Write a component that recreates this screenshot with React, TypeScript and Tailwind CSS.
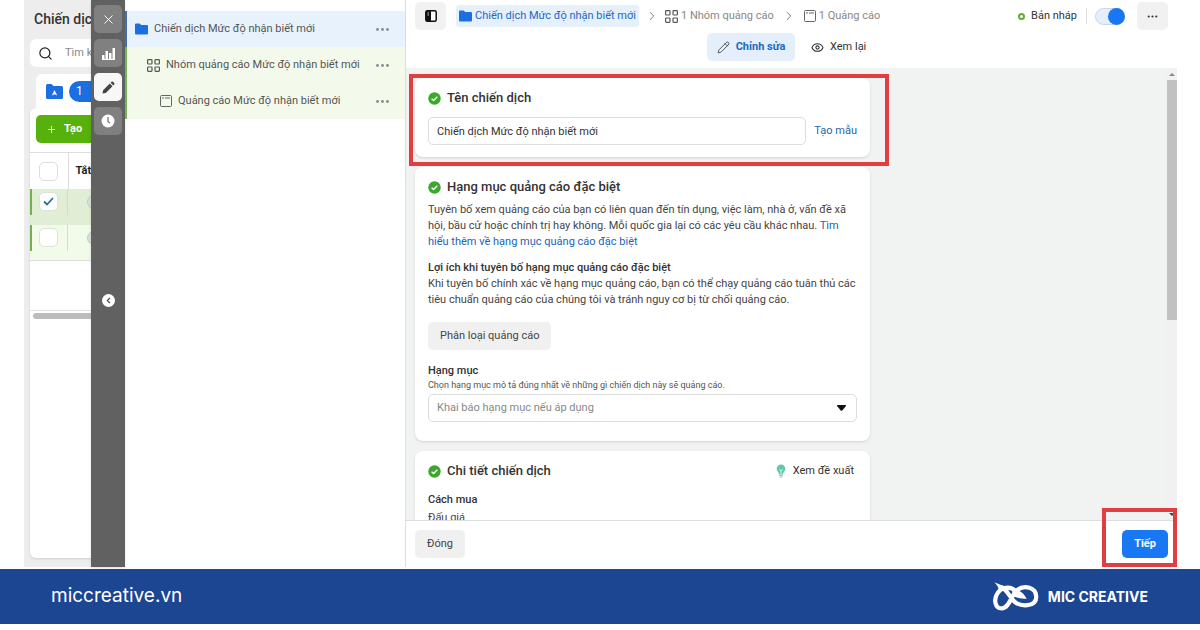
import type { ReactNode } from "react";
import { ChevronLeft, ChevronRight, Eye, MoreHorizontal, Pencil, Plus, Search, X } from "lucide-react";

function FolderIcon() {
  return (
    <svg viewBox="0 0 13 12" className="w-[13px] h-3 shrink-0 fill-[#1b6fe0]">
      <path d="M0 1.5Q0 .5 1 .5h3.6L6.2 2H12q1 0 1 1v7.5q0 1-1 1H1q-1 0-1-1z" />
    </svg>
  );
}

function AdSetIcon() {
  return (
    <svg viewBox="0 0 13 13" className="w-[13px] h-[13px] shrink-0 fill-none stroke-[#555]" strokeWidth="1.2">
      <rect x=".6" y=".6" width="4.4" height="4.4" rx=".8" />
      <rect x="8" y=".6" width="4.4" height="4.4" rx=".8" />
      <rect x=".6" y="8" width="4.4" height="4.4" rx=".8" />
      <rect x="8" y="8" width="4.4" height="4.4" rx=".8" />
    </svg>
  );
}

function AdIcon() {
  return (
    <svg viewBox="0 0 12 12" className="w-3 h-3 shrink-0 fill-none stroke-[#666]" strokeWidth="1">
      <rect x=".5" y=".5" width="11" height="11" rx="1.2" />
      <path d="M2 3h2M5 3h5" />
    </svg>
  );
}

function CheckBadge() {
  return (
    <svg viewBox="0 0 13 13" className="w-[13px] h-[13px] shrink-0">
      <circle cx="6.5" cy="6.5" r="6.2" fill="#3aa82c" />
      <path d="M3.6 6.7l2 1.9 3.7-3.9" fill="none" stroke="#fff" strokeWidth="1.4" />
    </svg>
  );
}

function Dots() {
  return (
    <svg viewBox="0 0 13 3" className="w-[13px] h-[3px] fill-[#858a90]">
      <circle cx="1.5" cy="1.5" r="1.4" />
      <circle cx="6.5" cy="1.5" r="1.4" />
      <circle cx="11.5" cy="1.5" r="1.4" />
    </svg>
  );
}

function BrandLogo() {
  return (
    <svg viewBox="40 274 146 92" className="w-12 h-[30px]">
      <path
        d="M62 288C84 290 90 318 108 334C126 350 175 352 175 320C175 290 138 282 116 299C98 315 92 355 69 355C48 355 44 327 56 309C68 290 94 284 112 302"
        fill="none"
        stroke="#fff"
        strokeWidth="13"
      />
      <path d="M46 275q19 5 30 16l-15 12q-2-18-15-28zM102 294q28 4 44 31q-32 2-44-12z" fill="#fff" />
    </svg>
  );
}

function Card({ title, children, aside }: { title: string; children: ReactNode; aside?: ReactNode }) {
  return (
    <section className="bg-white rounded-lg shadow-sm px-[13px] pt-3">
      <div className="flex items-center justify-between h-4">
        <h2 className="flex items-center gap-[6px] text-[13px] leading-4 font-medium text-[#333]">
          <CheckBadge />
          {title}
        </h2>
        {aside}
      </div>
      {children}
    </section>
  );
}

const treeRows = [
  { name: "Chiến dịch Mức độ nhận biết mới", icon: <FolderIcon />, row: "bg-[#e8f2fd] border-[#3f6fae] pl-2" },
  { name: "Nhóm quảng cáo Mức độ nhận biết mới", icon: <AdSetIcon />, row: "bg-[#f3faeb] border-[#78b45c] pl-5" },
  { name: "Quảng cáo Mức độ nhận biết mới", icon: <AdIcon />, row: "bg-[#f3faeb] border-[#78b45c] pl-[33px]" },
];

function CampaignList() {
  return (
    <aside className="w-[67px] shrink-0 overflow-hidden bg-[#ededed] pl-[6px] flex flex-col whitespace-nowrap">
      <h1 className="h-[39px] shrink-0 pl-1 text-sm leading-[38px] font-medium text-[#333]">Chiến dịch</h1>
      <label className="w-40 h-7 shrink-0 flex items-center gap-3 bg-white rounded-md pl-2 text-[11px] text-[#888]">
        <Search size={15} className="text-[#222] shrink-0" />
        <input type="search" placeholder="Tìm kiếm" aria-label="Tìm kiếm" className="w-24 outline-none placeholder:text-[#888]" />
      </label>
      <div className="mt-[7px] ml-[6px] w-40 h-[34px] shrink-0 bg-white rounded-t-md flex items-center gap-[6px] pl-[10px]">
        <svg viewBox="0 0 17 15" className="w-[17px] h-[15px] shrink-0">
          <path d="M0 1.5Q0 0 1.5 0h4l2 2h8Q17 2 17 3.5v10q0 1.5-1.500 1.500h-14Q0 15 0 13.500z" fill="#1b6fe0" />
          <path d="M8.500 6l2.700 5.500-2.700-1.200-2.700 1.200z" fill="#fff" />
        </svg>
        <span className="w-16 h-[21px] rounded-full bg-[#1b6fe0] text-white text-xs leading-[21px] pl-[7px]">1</span>
      </div>
      <div className="w-[170px] flex-1 mb-[9px] bg-white rounded-l-md shadow-sm">
        <button className="mt-[7px] ml-[6px] w-24 h-7 flex items-center gap-[7px] pl-[10px] rounded-[5px] bg-[#56b10c] text-white text-[11px] font-bold">
          <Plus size={11} /> Tạo
        </button>
        <table className="mt-[9px] w-full table-fixed border-y border-[#ddd]">
          <thead>
            <tr className="h-9 align-top">
              <th className="w-[38px] border-r border-[#ddd] pt-[9px] pl-[9px]">
                <input type="checkbox" aria-label="Chọn tất cả" className="block appearance-none w-[19px] h-[19px] rounded-[5px] border border-[#ddd] bg-white" />
              </th>
              <th className="pt-[10px] pl-[7px] text-left text-[11px] leading-4 font-bold text-[#222]">Tắt/Bật</th>
            </tr>
          </thead>
          <tbody>
            {[true, false].map((checked) => (
              <tr key={String(checked)} className={checked ? "bg-[#e1edd5]" : "bg-[#f2fae9]"}>
                <td className="h-9 p-0 align-top">
                  <div className="relative h-[26px] border-l-2 border-l-[#70b24d] border-r border-r-[#d3dccb] pt-[3px] pl-[7px]">
                    <input
                      type="checkbox"
                      defaultChecked={checked}
                      aria-label="Chọn chiến dịch"
                      className="block appearance-none w-[19px] h-[19px] rounded-[5px] border border-[#dde2d8] bg-white"
                    />
                    {checked && (
                      <svg viewBox="0 0 11 9" className="absolute left-[11px] top-2 w-[11px] h-[9px] fill-none stroke-[#226fab] pointer-events-none" strokeWidth="1.8">
                        <path d="M1 4.500l3 3L10 1" />
                      </svg>
                    )}
                  </div>
                </td>
                <td className="h-9 pt-[6px] pl-[19px] align-top">
                  <div className="w-7 h-[14px] rounded-full border border-[#b9cfbd] bg-[#d5e5dc]" />
                </td>
              </tr>
            ))}
          </tbody>
        </table>
        <div className="h-[50px] border-b border-[#e2e2e2]" />
        <div className="mt-[2px] ml-[3px] h-[6px] rounded-full bg-[#bdbdbd]" />
      </div>
    </aside>
  );
}

function ToolRail() {
  const button = "w-7 h-7 rounded-[5px] flex items-center justify-center bg-[#808080] text-white";
  return (
    <nav className="w-[34px] shrink-0 bg-[#616161] flex flex-col items-center gap-[6px] pt-[5px] shadow">
      <button aria-label="Đóng bảng" className={button}>
        <X size={15} strokeWidth={1.5} />
      </button>
      <button aria-label="Biểu đồ" className={button}>
        <svg viewBox="0 0 13 13" className="w-[13px] h-[13px] fill-white">
          <path d="M0 8h2.500v4H0zM3.500 4H6v8H3.500zM7 6h2.500v6H7zM10.500 1H13v11h-2.500zM0 12h13v1H0z" />
        </svg>
      </button>
      <button aria-label="Chỉnh sửa chiến dịch" className="w-7 h-7 rounded-[5px] flex items-center justify-center bg-[#f7f7f7]">
        <svg viewBox="0 0 13 13" className="w-[13px] h-[13px] fill-[#444]">
          <path d="M.5 12.500l.6-3.300 6.700-6.700 2.700 2.700-6.700 6.700zM8.600 1.700l.9-.9q.8-.6 1.500 0l1.200 1.200q.6.700 0 1.500l-.9.900z" />
        </svg>
      </button>
      <button aria-label="Lịch sử" className={button}>
        <svg viewBox="0 0 14 14" className="w-[14px] h-[14px]">
          <circle cx="7" cy="7" r="6.500" fill="#fff" />
          <path d="M7 3v4.500l2 1.500" fill="none" stroke="#777" strokeWidth="1.300" />
        </svg>
      </button>
      <button aria-label="Thu gọn" className="mt-[153px] w-[13px] h-[13px] rounded-full bg-white text-[#444] flex items-center justify-center">
        <ChevronLeft size={9} strokeWidth={3} />
      </button>
    </nav>
  );
}

function EditorHeader() {
  return (
    <header className="h-[68px] shrink-0 px-[9px] pt-[2px] flex flex-col gap-[3px] text-[11px] text-[#333]">
      <div className="flex items-center h-7">
        <button aria-label="Ẩn thanh bên" className="w-[31px] h-7 rounded-[5px] bg-[#f1f1f1] flex items-center justify-center">
          <svg viewBox="0 0 12 12" className="w-3 h-3">
            <rect x=".8" y=".8" width="10.400" height="10.400" rx="1.500" fill="#fff" stroke="#111" strokeWidth="1.500" />
            <path d="M1 1h5v10H1z" fill="#111" />
            <path d="M2.500 3h1.500M2.500 5h1.500" stroke="#fff" strokeWidth=".8" />
          </svg>
        </button>
        <a href="#campaign" className="ml-[10px] h-[22px] px-[3px] flex items-center gap-[3px] rounded-[3px] bg-[#e5f0fb] text-[#2069c4]">
          <FolderIcon /> Chiến dịch Mức độ nhận biết mới
        </a>
        <ChevronRight size={14} strokeWidth={1.5} className="ml-[6px] text-[#666]" />
        <a href="#adset" className="ml-[6px] flex items-center gap-[3px] text-[#888]">
          <AdSetIcon /> 1 Nhóm quảng cáo
        </a>
        <ChevronRight size={14} strokeWidth={1.5} className="ml-2 text-[#666]" />
        <a href="#ad" className="ml-2 flex items-center gap-[3px] text-[#888]">
          <AdIcon /> 1 Quảng cáo
        </a>
        <span className="ml-auto w-[7px] h-[7px] rounded-full border-2 border-[#5fae2f]" />
        <span className="ml-[6px] pr-[9px] h-4 leading-4 border-r border-[#ddd]">Bản nháp</span>
        <label className="relative ml-2 w-[30px] h-[17px]">
          <input type="checkbox" defaultChecked aria-label="Bật chiến dịch" className="block appearance-none w-[30px] h-[17px] rounded-full border border-[#cbd6e6] bg-[#e5eefb]" />
          <span className="absolute right-0 top-0 w-[17px] h-[17px] rounded-full bg-[#1877f2]" />
        </label>
        <button aria-label="Thêm" className="ml-3 w-[31px] h-7 rounded-[5px] bg-[#f1f1f1] flex items-center justify-center">
          <MoreHorizontal size={13} />
        </button>
      </div>
      <div className="flex h-7 pl-[292px]">
        <button className="w-[88px] rounded-[5px] bg-[#e5effb] flex items-center justify-center gap-[6px] font-bold text-[#2069c4]">
          <Pencil size={13} strokeWidth={1.5} className="text-[#333]" /> Chỉnh sửa
        </button>
        <button className="ml-4 flex items-center gap-[6px]">
          <Eye size={13} /> Xem lại
        </button>
      </div>
    </header>
  );
}

function EditorForm() {
  return (
    <div className="flex-1 min-h-0 flex bg-[#f1f3f3] overflow-hidden">
      <div className="flex-1 pl-[9px] pt-[10px] text-[11px] leading-4 text-[#444]">
        <div className="max-w-[455px] flex flex-col gap-[10px]">
          <div className="relative">
            <Card title="Tên chiến dịch">
              <div className="mt-[11px] pb-3 flex items-center gap-2">
                <input
                  aria-label="Tên chiến dịch"
                  defaultValue="Chiến dịch Mức độ nhận biết mới"
                  className="flex-1 min-w-0 h-7 rounded-[5px] border border-[#ddd] px-2 text-[#333]"
                />
                <a href="#template" className="text-[#2367a8]">Tạo mẫu</a>
              </div>
            </Card>
            <div className="absolute z-10 -left-[6px] -right-[19px] -top-1 -bottom-[9px] border-4 border-[#e03e40] pointer-events-none" />
          </div>

          <Card title="Hạng mục quảng cáo đặc biệt">
            <p className="mt-[7px]">
              Tuyên bố xem quảng cáo của bạn có liên quan đến tín dụng, việc làm, nhà ở, vấn đề xã hội, bầu cử hoặc chính trị hay
              không. Mỗi quốc gia lại có các yêu cầu khác nhau.{" "}
              <a href="#more" className="text-[#2064b8]">Tìm hiểu thêm về hạng mục quảng cáo đặc biệt</a>
            </p>
            <h3 className="mt-[10px] font-medium text-[#333]">Lợi ích khi tuyên bố hạng mục quảng cáo đặc biệt</h3>
            <p>
              Khi tuyên bố chính xác về hạng mục quảng cáo, bạn có thể chạy quảng cáo tuân thủ các tiêu chuẩn quảng cáo của chúng
              tôi và tránh nguy cơ bị từ chối quảng cáo.
            </p>
            <button className="mt-[14px] h-7 px-3 rounded-[5px] bg-[#f0f0f0]">Phân loại quảng cáo</button>
            <label htmlFor="category" className="mt-[13px] block font-medium text-[#333]">Hạng mục</label>
            <p className="text-[9px] leading-3 text-[#555]">Chọn hạng mục mô tả đúng nhất về những gì chiến dịch này sẽ quảng cáo.</p>
            <div className="relative mt-[3px] pb-[19px]">
              <select id="category" className="block appearance-none w-full h-7 rounded-[5px] border border-[#ddd] bg-white px-2 text-[#888]">
                <option>Khai báo hạng mục nếu áp dụng</option>
              </select>
              <svg viewBox="0 0 9 6" className="absolute right-[11px] top-[11px] w-[9px] h-[6px] fill-[#111] pointer-events-none">
                <path d="M.5 0h8q.7.500.2 1.200L5.300 5.500q-.8.700-1.600 0L.3 1.200Q-.2.500.5 0z" />
              </svg>
            </div>
          </Card>

          <Card
            title="Chi tiết chiến dịch"
            aside={
              <button className="flex items-center gap-[7px] mr-[3px] text-[#333]">
                <svg viewBox="0 0 10 14" className="w-[10px] h-[14px]">
                  <path d="M5 .5a4.300 4.300 0 0 1 2.600 7.700L7 10.500H3L2.400 8.200A4.300 4.300 0 0 1 5 .5z" fill="#62c5ad" />
                  <path d="M3.300 5L5 7.500 6.700 5M5 7.500v3" fill="none" stroke="#d8f5ec" strokeWidth=".9" />
                  <path d="M3.200 11.500h3.600M3.800 13h2.400" stroke="#8fbfb2" />
                </svg>
                Xem đề xuất
              </button>
            }
          >
            <h3 className="mt-[13px] font-medium text-[#333]">Cách mua</h3>
            <p className="mt-[2px] pb-3">Đấu giá</p>
          </Card>
        </div>
      </div>
      <div className="w-[11px] shrink-0 bg-[#f1f1f1] flex flex-col items-center">
        <div className="h-3 flex items-center">
          <div className="border-x-[3px] border-b-[3px] border-x-transparent border-b-[#888]" />
        </div>
        <div className="w-[10px] h-[240px] bg-[#c1c1c1]" />
        <div className="mt-auto h-3 flex items-center">
          <div className="border-x-[3px] border-t-[3px] border-x-transparent border-t-[#444]" />
        </div>
      </div>
    </div>
  );
}

export default function App() {
  return (
    <div className="h-screen flex flex-col bg-white font-[Roboto,sans-serif] pb-[6px]">
      <main className="flex-1 min-h-0 flex ml-6 mr-[23px] mb-[2px]">
        <CampaignList />
        <ToolRail />
        <div className="w-[280px] shrink-0 pt-[11px]">
          {treeRows.map((item) => (
            <div key={item.name} className={`h-9 border-l-2 pr-4 flex items-center gap-[6px] text-[11px] text-[#555] ${item.row}`}>
              {item.icon}
              <span className="flex-1 whitespace-nowrap">{item.name}</span>
              <button aria-label="Tùy chọn">
                <Dots />
              </button>
            </div>
          ))}
        </div>
        <div className="flex-1 min-w-0 flex flex-col border-l border-[#ddd]">
          <EditorHeader />
          <EditorForm />
          <div className="h-[47px] shrink-0 border-t border-[#ddd] px-[9px] flex items-center justify-between text-[11px]">
            <button className="h-7 px-3 rounded-[5px] bg-[#f0f0f0] text-[#444]">Đóng</button>
            <div className="relative">
              <button className="block h-7 px-3 rounded-[5px] bg-[#1877f2] text-white font-bold">Tiếp</button>
              <div className="absolute -left-5 -right-[9px] -top-[22px] -bottom-[9px] border-4 border-[#e03e40] pointer-events-none" />
            </div>
          </div>
        </div>
      </main>
      <footer className="h-[55px] shrink-0 bg-[#1c4592] text-white flex items-center justify-between pl-[51px] pr-[52px] font-[Inter,sans-serif]">
        <a href="#site" className="text-[19px]">miccreative.vn</a>
        <div className="flex items-center gap-2">
          <BrandLogo />
          <span className="text-sm font-bold">MIC CREATIVE</span>
        </div>
      </footer>
    </div>
  );
}
